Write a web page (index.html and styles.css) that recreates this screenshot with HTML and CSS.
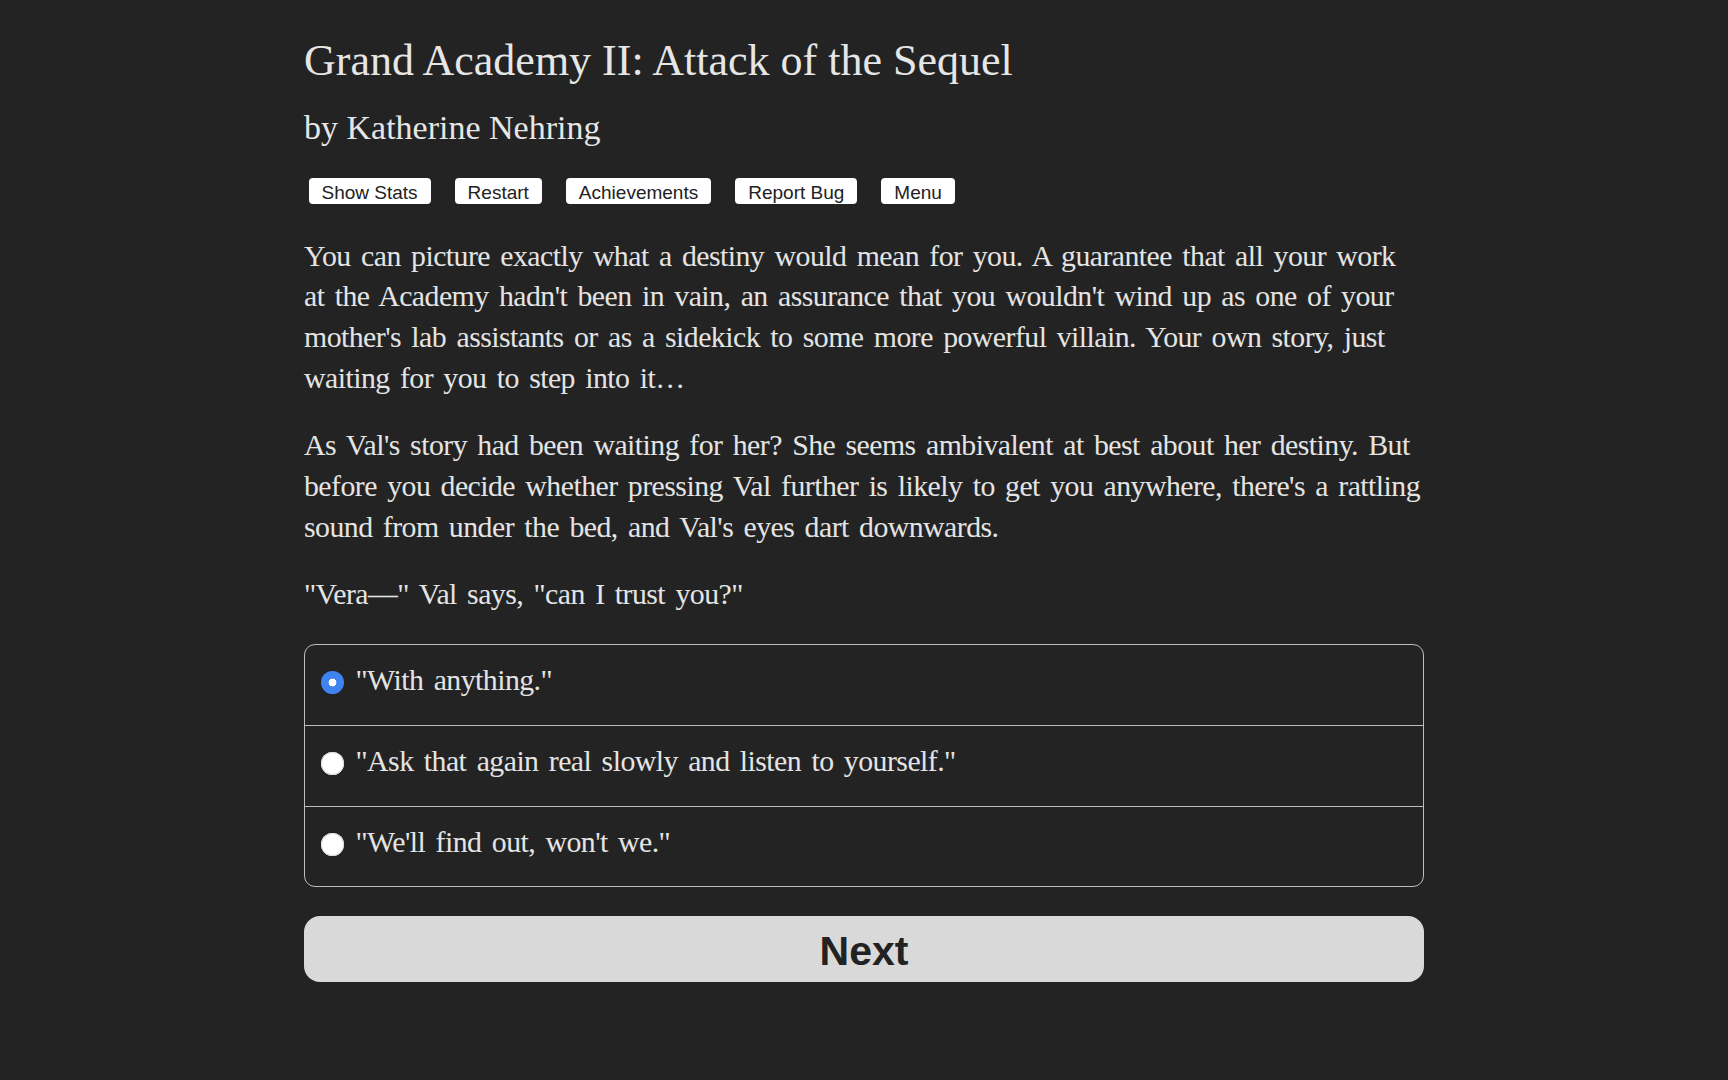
FILE: index.html
```html
<!DOCTYPE html>
<html lang="en">
<head>
<meta charset="utf-8">
<title>Grand Academy II: Attack of the Sequel</title>
<link rel="stylesheet" href="styles.css">
</head>
<body>
<main class="page">
  <header class="header">
    <h1 class="title">Grand Academy II: Attack of the Sequel</h1>
    <h2 class="byline">by Katherine Nehring</h2>
  </header>
  <nav class="toolbar">
    <button class="tool-btn" type="button">Show Stats</button>
    <button class="tool-btn" type="button">Restart</button>
    <button class="tool-btn" type="button">Achievements</button>
    <button class="tool-btn" type="button">Report Bug</button>
    <button class="tool-btn" type="button">Menu</button>
  </nav>
  <section class="story">
    <p>You can picture exactly what a destiny would mean for you. A guarantee that all your work at the Academy hadn't been in vain, an assurance that you wouldn't wind up as one of your mother's lab assistants or as a sidekick to some more powerful villain. Your own story, just waiting for you to step into it…</p>
    <p>As Val's story had been waiting for her? She seems ambivalent at best about her destiny. But before you decide whether pressing Val further is likely to get you anywhere, there's a rattling sound from under the bed, and Val's eyes dart downwards.</p>
    <p>"Vera—" Val says, "can I trust you?"</p>
  </section>
  <form class="choice-form">
    <div class="choices">
      <label class="choice"><input class="radio" type="radio" name="choice" checked><span class="choice-text">"With anything."</span></label>
      <label class="choice"><input class="radio" type="radio" name="choice"><span class="choice-text">"Ask that again real slowly and listen to yourself."</span></label>
      <label class="choice"><input class="radio" type="radio" name="choice"><span class="choice-text">"We'll find out, won't we."</span></label>
    </div>
    <button class="next-btn" type="button">Next</button>
  </form>
</main>
</body>
</html>
```
FILE: styles.css
```css
html, body {
  margin: 0;
  padding: 0;
  background: #232323;
}

body {
  color: #e4e4e4;
  font-family: "Liberation Serif", "Times New Roman", serif;
  min-height: 1080px;
}

.page {
  width: 1120px;
  margin: 0 auto;
  padding-top: 33px;
}

.title {
  margin: 0;
  font-weight: normal;
  font-size: 44px;
  line-height: 56px;
  color: #e6e6e6;
}

.byline {
  margin: 16.5px 0 0;
  font-weight: normal;
  font-size: 34px;
  line-height: 44px;
  color: #e6e6e6;
}

.toolbar {
  display: flex;
  gap: 24px;
  margin-top: 28.5px;
  padding-left: 4.5px;
}

.tool-btn {
  height: 26px;
  box-sizing: border-box;
  padding: 2.5px 13px 0;
  border: 0;
  border-radius: 4px;
  background: #ffffff;
  color: #222222;
  font-family: "Liberation Sans", Arial, sans-serif;
  font-size: 19px;
  line-height: 23.5px;
}

.story {
  margin-top: 31.5px;
  font-size: 29.8px;
  line-height: 40.8px;
  word-spacing: 3.4px;
  letter-spacing: -0.54px;
}

.story p {
  margin: 0 0 26.6px;
}

.choice-form {
  margin: 0;
}

.choices {
  margin-top: 29px;
  border: 1px solid #bdbdbd;
  border-radius: 11px;
  overflow: hidden;
}

.choice {
  display: flex;
  align-items: center;
  gap: 12px;
  padding: 15px 16px 24px;
  font-size: 29.8px;
  line-height: 40.8px;
  word-spacing: 3.4px;
  letter-spacing: -0.54px;
}

.choice + .choice {
  border-top: 1px solid #bdbdbd;
}

.radio {
  appearance: none;
  -webkit-appearance: none;
  flex: none;
  width: 23px;
  height: 23px;
  margin: 5px 0 0 -0.5px;
  border-radius: 50%;
  background: #ffffff;
  box-shadow: inset 0 0 0 1px #dcdcdc;
}

.radio:checked {
  background: radial-gradient(circle, #ffffff 0 3.6px, #3f83f0 4.2px);
  box-shadow: none;
}

.next-btn {
  display: block;
  width: 100%;
  height: 66px;
  margin-top: 29px;
  padding: 4px 0 0;
  border: 0;
  border-radius: 16px;
  background: #d9d9d9;
  color: #222222;
  font-family: "Liberation Sans", Arial, sans-serif;
  font-weight: bold;
  font-size: 41px;
  line-height: 60px;
}
```
